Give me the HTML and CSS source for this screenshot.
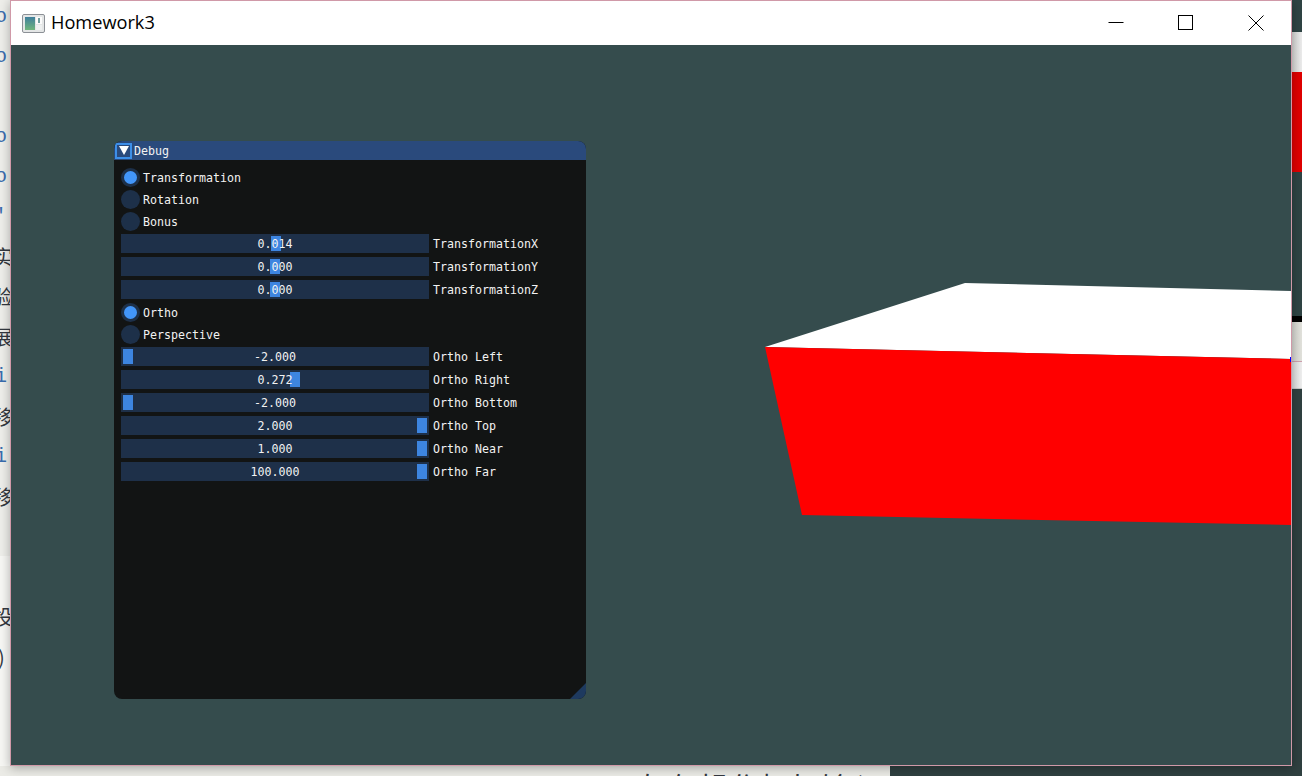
FILE: index.html
```html
<!DOCTYPE html>
<html lang="en">
<head>
    <meta charset="UTF-8">
    <meta name="viewport" content="width=device-width, initial-scale=1.0">
    <title>Homework3</title>
    <link rel="stylesheet" href="styles.css">
</head>
<body>
    <div class="desktop">
        <!-- whatever is left of the windows behind -->
        <div class="behind-left">
            <div class="line link">o</div>
            <div class="line link">o</div>
            <div class="line"></div>
            <div class="line link">o</div>
            <div class="line link">o</div>
            <div class="line link">'</div>
            <div class="line">实</div>
            <div class="line">验</div>
            <div class="line">展</div>
            <div class="line link">i</div>
            <div class="line">移</div>
            <div class="line link">i</div>
            <div class="line">移</div>
            <div class="line"></div>
            <div class="line"></div>
            <div class="line">投</div>
            <div class="line paren">)</div>
        </div>
        <div class="behind-right">
            <div class="strip strip-dark-top"></div>
            <div class="strip strip-gray"></div>
            <div class="strip strip-red"></div>
            <div class="strip strip-dark-mid"></div>
            <div class="strip strip-black"></div>
            <div class="strip strip-gray-low"></div>
            <div class="strip strip-light"></div>
        </div>
        <div class="behind-bottom">
            <span class="bottom-text">如何操作框架输入</span>
        </div>

        <div class="window">
            <div class="titlebar">
                <svg class="app-icon" width="23" height="19" viewBox="0 0 23 19">
                    <defs>
                        <linearGradient id="appPane" x1="0" y1="0" x2="0" y2="1">
                            <stop offset="0" stop-color="#3f7f9c"/>
                            <stop offset="1" stop-color="#6fb57c"/>
                        </linearGradient>
                    </defs>
                    <rect x="0.5" y="0.5" width="22" height="18" rx="1.5" fill="#e4e6e6" stroke="#8c9096"/>
                    <rect x="3" y="3" width="10" height="13" fill="url(#appPane)"/>
                    <rect x="14" y="3" width="6" height="7" fill="#fbfbfb"/>
                    <rect x="16" y="4" width="2" height="5" fill="#6f9c9c"/>
                    <rect x="14" y="11" width="6" height="5" fill="#eef0f0"/>
                </svg>
                <span class="title">Homework3</span>
                <div class="caption">
                    <div class="caption-btn">
                        <svg width="16" height="16" viewBox="0 0 16 16"><path d="M0.5 7.5H15.5" stroke="#000" fill="none"/></svg>
                    </div>
                    <div class="caption-btn">
                        <svg width="16" height="16" viewBox="0 0 16 16"><rect x="0.5" y="0.5" width="14" height="14" stroke="#000" fill="none"/></svg>
                    </div>
                    <div class="caption-btn">
                        <svg width="16" height="16" viewBox="0 0 16 16"><path d="M0.5 0.5L15.5 15.5M15.5 0.5L0.5 15.5" stroke="#000" fill="none"/></svg>
                    </div>
                </div>
            </div>

            <div class="canvas">
                <svg class="scene" width="1280" height="720" viewBox="0 0 1280 720">
                    <polygon points="754,302 954,238 1280,246 1280,314" fill="#fff"/>
                    <polygon points="754,302 1280,314 1280,480 791,470" fill="#f00"/>
                    <rect x="1279" y="312" width="1" height="5" fill="#00f"/>
                </svg>

                <div class="debug">
                    <div class="debug-title">
                        <div class="collapse"><span class="arrow"></span></div>
                        <span class="label">Debug</span>
                    </div>
                    <div class="debug-body">
                        <div class="radio on"><span class="dot"></span><span class="label">Transformation</span></div>
                        <div class="radio"><span class="dot"></span><span class="label">Rotation</span></div>
                        <div class="radio"><span class="dot"></span><span class="label">Bonus</span></div>

                        <div class="row">
                            <div class="slider"><span class="grab" style="left: 150px"></span><span class="value">0.014</span></div>
                            <span class="label">TransformationX</span>
                        </div>
                        <div class="row">
                            <div class="slider"><span class="grab" style="left: 149px"></span><span class="value">0.000</span></div>
                            <span class="label">TransformationY</span>
                        </div>
                        <div class="row">
                            <div class="slider"><span class="grab" style="left: 149px"></span><span class="value">0.000</span></div>
                            <span class="label">TransformationZ</span>
                        </div>

                        <div class="radio on"><span class="dot"></span><span class="label">Ortho</span></div>
                        <div class="radio"><span class="dot"></span><span class="label">Perspective</span></div>

                        <div class="row">
                            <div class="slider"><span class="grab" style="left: 2px"></span><span class="value">-2.000</span></div>
                            <span class="label">Ortho Left</span>
                        </div>
                        <div class="row">
                            <div class="slider"><span class="grab" style="left: 169px"></span><span class="value">0.272</span></div>
                            <span class="label">Ortho Right</span>
                        </div>
                        <div class="row">
                            <div class="slider"><span class="grab" style="left: 2px"></span><span class="value">-2.000</span></div>
                            <span class="label">Ortho Bottom</span>
                        </div>
                        <div class="row">
                            <div class="slider"><span class="grab" style="left: 296px"></span><span class="value">2.000</span></div>
                            <span class="label">Ortho Top</span>
                        </div>
                        <div class="row">
                            <div class="slider"><span class="grab" style="left: 296px"></span><span class="value">1.000</span></div>
                            <span class="label">Ortho Near</span>
                        </div>
                        <div class="row">
                            <div class="slider"><span class="grab" style="left: 296px"></span><span class="value">100.000</span></div>
                            <span class="label">Ortho Far</span>
                        </div>
                    </div>
                    <div class="grip"></div>
                </div>
            </div>
        </div>
    </div>
</body>
</html>
```

FILE: styles.css
```css
html, body {
    margin: 0;
    background: #2f4040;
    overflow: hidden;
}
.desktop {
    position: relative;
    width: 1302px;
    height: 776px;
    overflow: hidden;
}

/* background windows */
.behind-left {
    position: absolute;
    left: 0;
    top: -3px;
    width: 12px;
    height: 779px;
    overflow: hidden;
    background: linear-gradient(#eeeeea 0, #eeeeea 559px, #f7f7f4 559px);
}
.line {
    height: 40px;
    line-height: 40px;
    margin-left: -7px;
    width: 24px;
    font-family: "Noto Sans CJK SC", "Liberation Sans", sans-serif;
    font-size: 20px;
    color: #33383f;
}
.link {
    margin-left: -5px;
    font-family: "Liberation Mono", monospace;
    color: #3a6cae;
}
.paren {
    margin-left: -2px;
}
.behind-right {
    position: absolute;
    left: 1292px;
    top: 0;
    width: 10px;
    display: flex;
    flex-direction: column;
}
.strip-dark-top {
    height: 32px;
    background: #2f4444;
}
.strip-gray {
    height: 40px;
    background: linear-gradient(90deg, #d6d6d4, #ececec);
}
.strip-red {
    height: 100px;
    background: #e00000;
}
.strip-dark-mid {
    height: 144px;
    background: #2f4444;
}
.strip-black {
    height: 6px;
    background: #000;
}
.strip-gray-low {
    height: 39px;
    background: linear-gradient(90deg, #d6d6d0, #e2e2dc);
    border-bottom: 1px solid #cfa0ae;
}
.strip-light {
    height: 26px;
    background: linear-gradient(90deg, #dcdcdc, #efefef);
    border-bottom: 1px solid #c8c8c8;
}
.behind-bottom {
    position: absolute;
    left: 0;
    top: 766px;
    width: 890px;
    height: 10px;
    overflow: hidden;
    background: #ebebe6;
}
.bottom-text {
    position: absolute;
    left: 640px;
    top: 3px;
    font-family: "Noto Sans CJK SC", sans-serif;
    font-size: 30px;
    line-height: 34px;
    color: #33383f;
}

/* main window */
.window {
    position: absolute;
    left: 10px;
    top: 0;
    width: 1280px;
    border: 1px solid #d099a8;
    box-shadow: 0 2px 10px rgba(0, 0, 0, 0.3);
}
.titlebar {
    display: flex;
    align-items: center;
    height: 44px;
    background: #fff;
}
.app-icon {
    margin-left: 11px;
    margin-right: 6px;
}
.title {
    padding-bottom: 2px;
    font-family: "Open Sans", sans-serif;
    font-size: 18.2px;
    color: #000;
}
.caption {
    display: flex;
    margin-left: auto;
}
.caption-btn {
    display: flex;
    align-items: center;
    justify-content: center;
    width: 70px;
    height: 44px;
}

/* GL viewport */
.canvas {
    position: relative;
    width: 1280px;
    height: 720px;
    background: #354c4d;
    overflow: hidden;
}
.scene {
    position: absolute;
    left: 0;
    top: 0;
}

/* imgui panel */
.debug {
    position: absolute;
    left: 103px;
    top: 96px;
    width: 472px;
    height: 558px;
    background: #121414;
    border-radius: 8px;
    overflow: hidden;
    font-family: "DejaVu Sans Mono", monospace;
    font-size: 11.63px;
    line-height: 19px;
    color: #f2f2f2;
}
.label {
    padding-top: 2px;
}
.debug-title {
    display: flex;
    align-items: center;
    gap: 2px;
    height: 19px;
    padding-left: 1px;
    background: #2a4a7c;
}
.collapse {
    display: flex;
    align-items: center;
    justify-content: center;
    box-sizing: border-box;
    width: 17px;
    height: 16px;
    border: 2px solid #3d8fe8;
}
.arrow {
    width: 0;
    height: 0;
    border-left: 5px solid transparent;
    border-right: 5px solid transparent;
    border-top: 9px solid #fff;
}
.debug-body {
    display: flex;
    flex-direction: column;
    padding: 8px 0 0 7px;
}
.radio {
    display: flex;
    align-items: center;
    gap: 3px;
    height: 19px;
    margin-bottom: 3px;
}
.dot {
    box-sizing: border-box;
    width: 19px;
    height: 19px;
    border-radius: 50%;
    background: #1d3049;
}
.radio.on .dot {
    border: 3px solid #1d3049;
    background: #4296fa;
}
.row {
    display: flex;
    align-items: center;
    gap: 4px;
    height: 19px;
    margin-bottom: 4px;
}
.slider {
    position: relative;
    width: 308px;
    height: 19px;
    line-height: 21px;
    background: #1e3049;
    text-align: center;
}
.grab {
    position: absolute;
    top: 2px;
    width: 10px;
    height: 15px;
    background: #3d85e0;
}
.value {
    position: relative;
}
.grip {
    position: absolute;
    right: 0;
    bottom: 0;
    width: 16px;
    height: 16px;
    background: #1e3a5f;
    clip-path: polygon(100% 0, 100% 100%, 0 100%);
}
```
